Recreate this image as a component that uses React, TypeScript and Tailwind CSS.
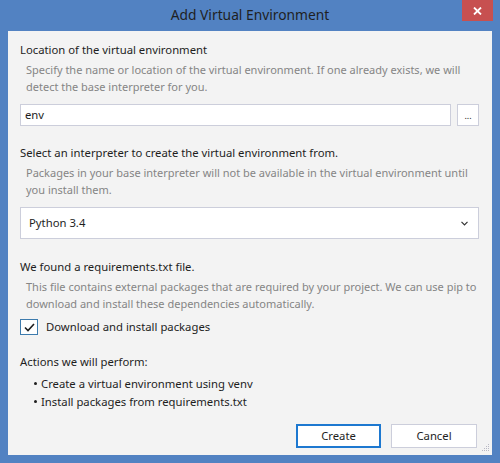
import React from "react";

const font = { fontFamily: '"Segoe UI", "Noto Sans", Arial, sans-serif' };

function Section({
  title,
  desc,
  children,
}: {
  title: string;
  desc: string;
  children?: React.ReactNode;
}) {
  return (
    <div className="flex flex-col">
      <p className="text-[11.3px] leading-[17px] text-[#1e1e1e]">{title}</p>
      <p className="mt-[3px] pl-[6px] text-[11px] leading-[17px] text-[#858585]">{desc}</p>
      {children}
    </div>
  );
}

export default function App() {
  return (
    <div
      className="w-[500px] h-[463px] bg-[#5282c2] flex flex-col overflow-hidden"
      style={font}
    >
      {/* Title bar */}
      <div className="h-[31px] flex items-start shrink-0">
        <div className="flex-1 h-full flex items-center justify-center pl-[38px]">
          <span className="text-[13.8px] text-[#1f1f1f]">Add Virtual Environment</span>
        </div>
        <button className="w-[31px] h-[21px] mr-[7px] bg-[#c75050] flex items-center justify-center">
          <svg width="9" height="8" viewBox="0 0 9 8">
            <path d="M1 0.5 L8 7.5 M8 0.5 L1 7.5" stroke="#fff" strokeWidth="1.8" />
          </svg>
        </button>
      </div>

      {/* Body */}
      <div className="flex-1 mx-[8px] mb-[8px] bg-[#f3f3f3] px-[12px] pt-[10px] flex flex-col relative">
        <Section
          title="Location of the virtual environment"
          desc="Specify the name or location of the virtual environment. If one already exists, we will detect the base interpreter for you."
        >
          <div className="mt-[9px] flex gap-[6px] pr-[1px]">
            <div className="flex-1 h-[22px] bg-white border border-[#cccedb] flex items-center pl-[4px] text-[11.3px] text-[#1e1e1e]">
              env
            </div>
            <div className="w-[22px] h-[22px] bg-white border border-[#cccedb] flex items-end justify-center pb-[5px]">
              <span className="text-[9px] leading-[9px] text-[#1e1e1e]">...</span>
            </div>
          </div>
        </Section>

        <div className="mt-[18px]">
          <Section
            title="Select an interpreter to create the virtual environment from."
            desc="Packages in your base interpreter will not be available in the virtual environment until you install them."
          >
            <div className="mt-[9px] mr-[1px] h-[32px] bg-white border border-[#cccedb] flex items-center pl-[8px] pr-[10px] text-[11.3px] text-[#1e1e1e]">
              <span className="flex-1">Python 3.4</span>
              <svg width="7" height="5" viewBox="0 0 7 5">
                <path d="M0.5 0.8 L3.5 3.8 L6.5 0.8" stroke="#333" strokeWidth="1.2" fill="none" />
              </svg>
            </div>
          </Section>
        </div>

        <div className="mt-[19px]">
          <Section
            title="We found a requirements.txt file."
            desc="This file contains external packages that are required by your project. We can use pip to download and install these dependencies automatically."
          />
        </div>

        <label className="mt-[7px] flex items-center gap-[8px] text-[11.3px] text-[#1e1e1e]">
          <span className="w-[18px] h-[16px] border border-[#3d7bad] bg-white flex items-center justify-center">
            <svg width="11" height="9" viewBox="0 0 11 9">
              <path d="M1 4.5 L4 7.5 L10 1" stroke="#1e1e1e" strokeWidth="1.6" fill="none" />
            </svg>
          </span>
          Download and install packages
        </label>

        <p className="mt-[17px] text-[11.3px] leading-[17px] text-[#1e1e1e]">Actions we will perform:</p>
        <ul className="mt-[5px] pl-[14px] flex flex-col text-[11.3px] leading-[18px] text-[#1e1e1e]">
          <li className="flex items-center gap-[4px]">
            <span className="w-[3px] h-[3px] rounded-full bg-[#1e1e1e]" />
            Create a virtual environment using venv
          </li>
          <li className="flex items-center gap-[4px]">
            <span className="w-[3px] h-[3px] rounded-full bg-[#1e1e1e]" />
            Install packages from requirements.txt
          </li>
        </ul>

        <div className="mt-auto mb-[7px] flex justify-end gap-[10px] pr-[3px]">
          <button className="w-[85px] h-[24px] bg-white border-2 border-[#1d78d0] text-[11.3px] text-[#1e1e1e]">
            Create
          </button>
          <button className="w-[86px] h-[24px] bg-white border border-[#cccedb] text-[11.3px] text-[#1e1e1e]">
            Cancel
          </button>
        </div>

        {/* resize grip */}
        <svg className="absolute right-[2px] bottom-[3px]" width="9" height="9" viewBox="0 0 9 9">
          {[
            [7, 1],
            [5, 3],
            [7, 3],
            [3, 5],
            [5, 5],
            [7, 5],
            [1, 7],
            [3, 7],
            [5, 7],
            [7, 7],
          ].map(([x, y], i) => (
            <rect key={i} x={x} y={y} width="1" height="1" fill="#b8b8c4" />
          ))}
        </svg>
      </div>
    </div>
  );
}
